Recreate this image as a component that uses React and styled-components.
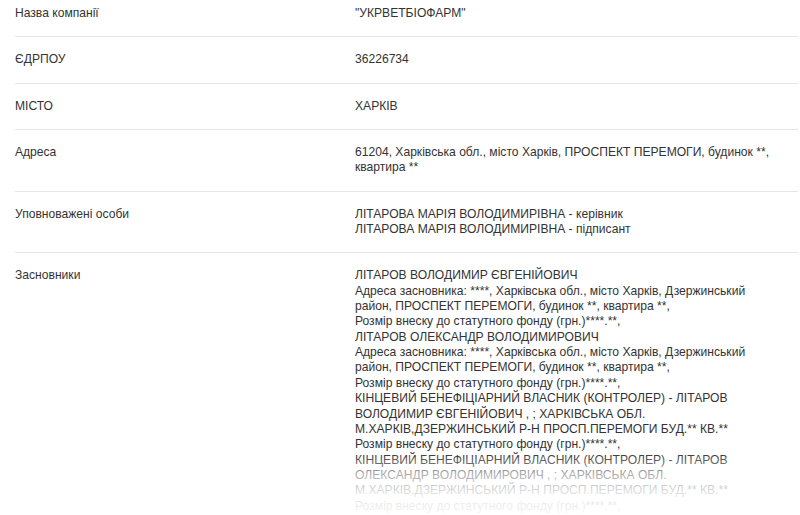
import React from "react";
import styled, { createGlobalStyle } from "styled-components";

const Global = createGlobalStyle`
  html, body { margin: 0; padding: 0; background: #fff; }
  body { font-family: "Liberation Sans", Arial, sans-serif; color: #333; overflow: hidden; }
`;

const Page = styled.div`
  position: relative;
  width: 800px;
  height: 515px;
  overflow: hidden;
`;

const Table = styled.div`
  margin: -9px 2px 0 15px;
`;

const Row = styled.div`
  display: grid;
  grid-template-columns: 340px 425px;
  padding: 15px 0;
  border-bottom: 1px solid #e6e6e6;
  font-size: 12.1px;
  line-height: 15.35px;
`;

const Label = styled.div`
  color: #333;
`;

const Value = styled.div`
  color: #333;
`;

const Line = styled.div``;

const Fade = styled.div`
  position: absolute;
  left: 0;
  right: 0;
  bottom: 0;
  height: 62px;
  background: linear-gradient(to bottom, rgba(255,255,255,0) 0%, rgba(255,255,255,0.6) 35%, rgba(255,255,255,0.85) 65%, rgba(255,255,255,0.95) 100%);
  pointer-events: none;
`;

const rows = [
  { label: "Назва компанії", lines: ['"УКРВЕТБІОФАРМ"'] },
  { label: "ЄДРПОУ", lines: ["36226734"] },
  { label: "МІСТО", lines: ["ХАРКІВ"] },
  {
    label: "Адреса",
    lines: ["61204, Харківська обл., місто Харків, ПРОСПЕКТ ПЕРЕМОГИ, будинок **, квартира **"],
  },
  {
    label: "Уповноважені особи",
    lines: [
      "ЛІТАРОВА МАРІЯ ВОЛОДИМИРІВНА - керівник",
      "ЛІТАРОВА МАРІЯ ВОЛОДИМИРІВНА - підписант",
    ],
  },
  {
    label: "Засновники",
    lines: [
      "ЛІТАРОВ ВОЛОДИМИР ЄВГЕНІЙОВИЧ",
      "Адреса засновника: ****, Харківська обл., місто Харків, Дзержинський район, ПРОСПЕКТ ПЕРЕМОГИ, будинок **, квартира **,",
      "Розмір внеску до статутного фонду (грн.)****.**,",
      "ЛІТАРОВ ОЛЕКСАНДР ВОЛОДИМИРОВИЧ",
      "Адреса засновника: ****, Харківська обл., місто Харків, Дзержинський район, ПРОСПЕКТ ПЕРЕМОГИ, будинок **, квартира **,",
      "Розмір внеску до статутного фонду (грн.)****.**,",
      "КІНЦЕВИЙ БЕНЕФІЦІАРНИЙ ВЛАСНИК (КОНТРОЛЕР) - ЛІТАРОВ ВОЛОДИМИР ЄВГЕНІЙОВИЧ , ; ХАРКІВСЬКА ОБЛ. М.ХАРКІВ,ДЗЕРЖИНСЬКИЙ Р-Н ПРОСП.ПЕРЕМОГИ БУД.** КВ.**",
      "Розмір внеску до статутного фонду (грн.)****.**,",
      "КІНЦЕВИЙ БЕНЕФІЦІАРНИЙ ВЛАСНИК (КОНТРОЛЕР) - ЛІТАРОВ ОЛЕКСАНДР ВОЛОДИМИРОВИЧ , ; ХАРКІВСЬКА ОБЛ. М.ХАРКІВ,ДЗЕРЖИНСЬКИЙ Р-Н ПРОСП.ПЕРЕМОГИ БУД.** КВ.**",
      "Розмір внеску до статутного фонду (грн.)****.**,",
    ],
  },
];

export default function App() {
  return (
    <Page>
      <Global />
      <Table>
        {rows.map((r) => (
          <Row key={r.label}>
            <Label>{r.label}</Label>
            <Value>
              {r.lines.map((l, i) => (
                <Line key={i}>{l}</Line>
              ))}
            </Value>
          </Row>
        ))}
      </Table>
      <Fade />
    </Page>
  );
}
